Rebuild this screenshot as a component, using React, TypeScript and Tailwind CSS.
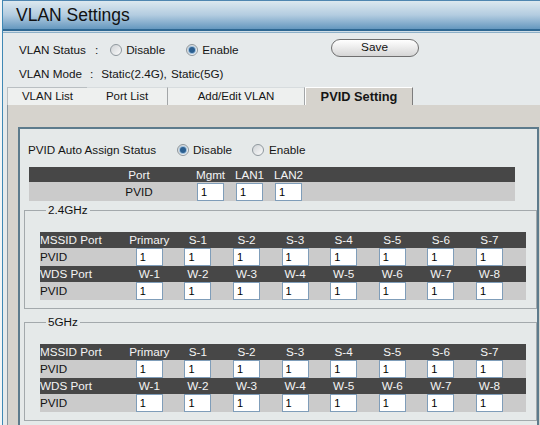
import React from 'react';

const Radio: React.FC<{ checked?: boolean }> = ({ checked }) => (
    <span className="w-[12px] h-[12px] shrink-0 rounded-full border border-[#8f989e] bg-linear-to-br from-[#cfd3d6] to-[#fbfbfb] flex items-center justify-center">
        {checked && <span className="w-[6px] h-[6px] rounded-full bg-[#2b5f90] ring-1 ring-[#9dbfdc]" />}
    </span>
);

const Box: React.FC = () => (
    <input
        type="text"
        defaultValue="1"
        readOnly
        className="w-[27px] h-[18px] border border-[#7f9db9] bg-white px-[3px] text-[11px] leading-none text-black outline-none"
    />
);

const cols = 'grid grid-cols-[85px_repeat(8,48.6px)_1fr] items-center';

const WifiTable: React.FC = () => {
    const mssid = ['Primary', 'S-1', 'S-2', 'S-3', 'S-4', 'S-5', 'S-6', 'S-7'];
    const wds = ['W-1', 'W-2', 'W-3', 'W-4', 'W-5', 'W-6', 'W-7', 'W-8'];
    const head = (first: string, labels: string[]) => (
        <div className={`${cols} h-[16px] bg-[#474747] text-[#f4f4f4]`}>
            <span>{first}</span>
            {labels.map(l => <span key={l} className="text-center">{l}</span>)}
            <span />
        </div>
    );
    const pvid = (k: string) => (
        <div className={`${cols} h-[18px] bg-[#cbcbcb] text-[#111]`}>
            <span>PVID</span>
            {Array.from({ length: 8 }).map((_, i) => (
                <span key={k + i} className="flex justify-center"><Box /></span>
            ))}
            <span />
        </div>
    );
    return (
        <div className="w-[486px] text-[11.7px] leading-none">
            {head('MSSID Port', mssid)}
            {pvid('m')}
            {head('WDS Port', wds)}
            {pvid('w')}
        </div>
    );
};

const Band: React.FC<{ name: string; className?: string }> = ({ name, className }) => (
    <fieldset className={`ml-[4px] w-[513px] border border-[#a3a9ac] pl-[15px] pt-[15px] pb-[8px] ${className ?? ''}`}>
        <legend className="ml-[6px] px-[2px] text-[11.7px] leading-[14px] text-[#111]">{name}</legend>
        <WifiTable />
    </fieldset>
);

const App: React.FC = () => {
    return (
        <div className="w-[540px] h-[425px] overflow-hidden flex bg-[#e6eaeb] font-['Liberation_Sans',Arial,sans-serif] text-[#151515]">
            <div className="w-[2px] bg-[#f3f6f7]" />
            <div className="w-[1px] bg-[#3f88b4]" />
            <div className="flex-1 flex flex-col min-w-0">
                {/* title bar */}
                <div className="h-[33px] flex flex-col shrink-0">
                    <div className="h-[1px] bg-[#4f86b0]" />
                    <div className="h-[28px] bg-linear-to-b from-[#dce8ef] via-[#b3cce0] to-[#6598bf] flex items-center pl-[13px] text-[17.5px] text-[#111]">
                        VLAN Settings
                    </div>
                    <div className="h-[2px] bg-[#2f6893]" />
                    <div className="h-[1px] bg-[#d0dee7]" />
                    <div className="h-[1px] bg-[#8db0c8]" />
                </div>

                {/* status */}
                <div className="mt-[6px] h-[22px] flex items-center pl-[16px] text-[11.7px] shrink-0">
                    <span>VLAN Status</span>
                    <span className="ml-[9px]">:</span>
                    <span className="ml-[12px]"><Radio /></span>
                    <span className="ml-[4px]">Disable</span>
                    <span className="ml-[21px]"><Radio checked /></span>
                    <span className="ml-[4px]">Enable</span>
                    <button className="ml-[92px] self-start w-[88px] h-[18px] rounded-full border border-[#6f6f6f] bg-linear-to-b from-white to-[#d6d6d6] text-[11.8px] text-[#111] leading-none">
                        Save
                    </button>
                </div>
                <div className="mt-[5px] h-[16px] flex items-center pl-[16px] text-[11.7px] shrink-0">
                    <span>VLAN Mode</span>
                    <span className="ml-[8px]">:</span>
                    <span className="ml-[8px]">Static(2.4G),</span>
                    <span className="ml-[4px]">Static(5G)</span>
                </div>

                {/* tabs */}
                <div className="mt-[5px] h-[18px] ml-[4px] flex text-[11.5px] shrink-0">
                    <div className="w-[80px] flex items-center justify-center pt-[1px] bg-[#eef0ef] border-l border-t border-[#b9bfc2] border-r-[#a3a6a8]">VLAN List</div>
                    <div className="w-[81px] flex items-center justify-center pt-[1px] bg-[#eef0ef] border-t border-r border-t-[#d7dcde] border-r-[#a3a6a8]">Port List</div>
                    <div className="w-[137px] flex items-center justify-center pt-[1px] bg-[#eef0ef] border-t border-r border-t-[#d7dcde] border-r-[#a3a6a8]">Add/Edit VLAN</div>
                    <div className="w-[108px] flex items-center justify-center pt-[1px] bg-[#d6d3cd] border-t border-l border-r border-t-white border-l-white border-r-[#7d7d7d] font-bold text-[12.8px]">PVID Setting</div>
                </div>

                {/* content */}
                <div className="flex-1 ml-[4px] bg-[#d6d3cd] border-l border-[#8796a0] pt-[22px] pl-[10px]">
                    <div className="w-[521px] h-[400px] bg-[#e5e9e9] border-t-2 border-l-2 border-r-2 border-[#5d7b8c]">
                        <div className="mt-[13px] h-[16px] flex items-center pl-[8px] text-[11.7px]">
                            <span>PVID Auto Assign Status</span>
                            <span className="ml-[21px]"><Radio checked /></span>
                            <span className="ml-[4px]">Disable</span>
                            <span className="ml-[20px]"><Radio /></span>
                            <span className="ml-[5px]">Enable</span>
                        </div>

                        <div className="mt-[9px] ml-[9px] w-[486px] text-[11.7px] leading-none">
                            <div className="grid grid-cols-[162px_39px_39px_39px_1fr] items-center h-[15px] bg-[#474747] text-[#f4f4f4]">
                                <span className="pl-[58px] text-center">Port</span>
                                <span className="text-center">Mgmt</span>
                                <span className="text-center">LAN1</span>
                                <span className="text-center">LAN2</span>
                                <span />
                            </div>
                            <div className="grid grid-cols-[162px_39px_39px_39px_1fr] items-center h-[19px] bg-[#cbcbcb] text-[#111]">
                                <span className="pl-[58px] text-center">PVID</span>
                                <span className="flex justify-center"><Box /></span>
                                <span className="flex justify-center"><Box /></span>
                                <span className="flex justify-center"><Box /></span>
                                <span />
                            </div>
                        </div>

                        <Band name="2.4GHz" className="mt-[2px]" />
                        <Band name="5GHz" className="mt-[6px]" />
                    </div>
                </div>
            </div>
        </div>
    );
};

export default App;
